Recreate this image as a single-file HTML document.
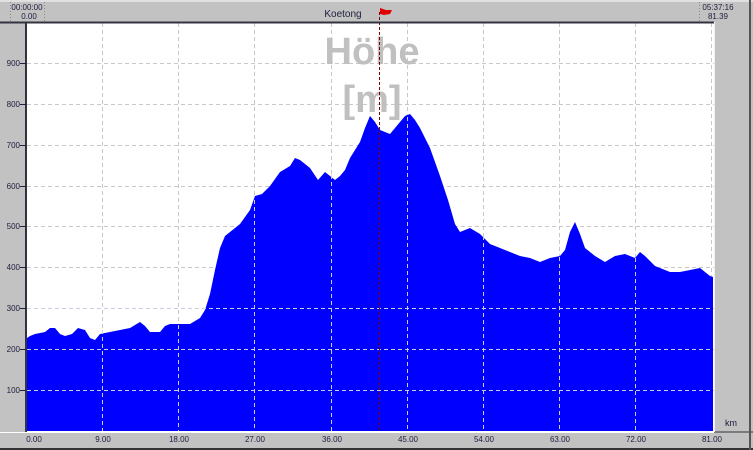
<!DOCTYPE html>
<html><head><meta charset="utf-8"><style>
html,body{margin:0;padding:0;}
body{width:753px;height:450px;background:#c0c0c0;position:relative;overflow:hidden;font-family:"Liberation Sans",sans-serif;}
</style></head><body>
<svg width="753" height="450" xmlns="http://www.w3.org/2000/svg" style="position:absolute;left:0;top:0">
<rect width="753" height="450" fill="#c2c2c2"/>
<rect x="27" y="23" width="687" height="409" fill="#fff"/>
<g stroke="#c8c8c8" stroke-dasharray="4,3" stroke-width="1">
<line x1="102.5" y1="23" x2="102.5" y2="431"/><line x1="178.5" y1="23" x2="178.5" y2="431"/>
<line x1="254.5" y1="23" x2="254.5" y2="431"/><line x1="331.5" y1="23" x2="331.5" y2="431"/>
<line x1="407.5" y1="23" x2="407.5" y2="431"/><line x1="483.5" y1="23" x2="483.5" y2="431"/>
<line x1="559.5" y1="23" x2="559.5" y2="431"/><line x1="635.5" y1="23" x2="635.5" y2="431"/>
<line x1="711.5" y1="23" x2="711.5" y2="431"/>
<line x1="27" y1="63.5" x2="714" y2="63.5"/><line x1="27" y1="104.5" x2="714" y2="104.5"/>
<line x1="27" y1="145.5" x2="714" y2="145.5"/><line x1="27" y1="186.5" x2="714" y2="186.5"/>
<line x1="27" y1="226.5" x2="714" y2="226.5"/><line x1="27" y1="267.5" x2="714" y2="267.5"/>
<line x1="27" y1="308.5" x2="714" y2="308.5"/><line x1="27" y1="349.5" x2="714" y2="349.5"/>
<line x1="27" y1="390.5" x2="714" y2="390.5"/>
</g>
<text x="372" y="64" font-size="38" font-weight="bold" fill="#c0c0c0" text-anchor="middle">Höhe</text>
<text x="372" y="112" font-size="38" font-weight="bold" fill="#c0c0c0" text-anchor="middle">[m]</text>
<polygon fill="#0000ff" points="27,338 30,336 35,334 45,332 50,328 55,328 60,334 65,336 72,334 78,328 85,330 90,338 95,340 100,334 110,332 120,330 130,328 140,322 145,326 150,332 160,332 165,326 170,324 180,324 190,324 200,318 205,310 210,294 215,270 220,248 225,236 235,228 240,224 250,210 255,196 262,194 270,186 280,172 290,166 295,158 300,160 310,168 318,180 325,172 330,176 335,180 340,176 345,170 350,158 360,142 365,128 370,116 375,122 380,130 385,132 390,134 395,128 400,122 405,116 410,114 415,120 420,128 430,148 440,176 448,200 455,224 460,232 470,228 480,234 490,244 500,248 510,252 520,256 530,258 540,262 550,258 560,256 565,250 570,232 575,222 580,234 585,248 595,256 605,262 615,256 625,254 635,258 640,252 645,256 655,266 665,270 670,272 680,272 690,270 700,268 705,272 710,276 713,277 713,431 27,431"/>
<g stroke="#ccccdd" stroke-dasharray="4,3" stroke-width="1">
<line x1="27" y1="349.5" x2="713" y2="349.5"/><line x1="27" y1="390.5" x2="713" y2="390.5"/><line x1="27" y1="308.5" x2="713" y2="308.5"/>
<line x1="102.5" y1="330" x2="102.5" y2="431"/><line x1="178.5" y1="325" x2="178.5" y2="431"/><line x1="254.5" y1="200" x2="254.5" y2="431"/>
<line x1="331.5" y1="175" x2="331.5" y2="431"/><line x1="407.5" y1="117" x2="407.5" y2="431"/><line x1="483.5" y1="236" x2="483.5" y2="431"/>
<line x1="559.5" y1="257" x2="559.5" y2="431"/><line x1="635.5" y1="258" x2="635.5" y2="431"/>
</g>
<line x1="379.5" y1="12" x2="379.5" y2="431" stroke="#800000" stroke-dasharray="3,2"/>
<polygon points="380,8 386,10 392,10 390,14 384,15 380,14" fill="#e00000"/>
<rect x="0" y="0" width="753" height="2" fill="#e0e0e0"/>
<line x1="0" y1="22.5" x2="714" y2="22.5" stroke="#333340" stroke-width="2"/>
<line x1="26" y1="22" x2="26" y2="432" stroke="#333340" stroke-width="2"/>
<line x1="0" y1="432.5" x2="714" y2="432.5" stroke="#fff" stroke-width="1"/>
<line x1="714" y1="432" x2="753" y2="432" stroke="#333340" stroke-width="1"/>
<line x1="714.5" y1="22" x2="714.5" y2="432" stroke="#f0f0f0"/>
<rect x="0" y="448" width="753" height="2" fill="#333"/>
<line x1="750" y1="0" x2="750" y2="450" stroke="#555" stroke-width="2"/>
<line x1="10.5" y1="2" x2="10.5" y2="22" stroke="#888" stroke-dasharray="1,2"/>
<line x1="44.5" y1="2" x2="44.5" y2="22" stroke="#888" stroke-dasharray="1,2"/>
<line x1="699.5" y1="2" x2="699.5" y2="22" stroke="#888" stroke-dasharray="1,2"/>
<g font-size="8" fill="#202040">
<text x="27" y="10" text-anchor="middle">00:00:00</text>
<text x="29" y="19" text-anchor="middle">0.00</text>
<text x="718" y="10" text-anchor="middle">05:37:16</text>
<text x="718" y="19" text-anchor="middle">81.39</text>
</g>
<text x="343" y="17" font-size="10" fill="#202040" text-anchor="middle">Koetong</text>
<g font-size="8" fill="#202040" text-anchor="end">
<text x="20" y="66">900</text><text x="20" y="107">800</text><text x="20" y="148">700</text>
<text x="20" y="189">600</text><text x="20" y="229">500</text><text x="20" y="270">400</text>
<text x="20" y="311">300</text><text x="20" y="352">200</text><text x="20" y="393">100</text>
</g>
<g stroke="#202040">
<line x1="20" y1="63.5" x2="26" y2="63.5"/><line x1="20" y1="104.5" x2="26" y2="104.5"/><line x1="20" y1="145.5" x2="26" y2="145.5"/>
<line x1="20" y1="186.5" x2="26" y2="186.5"/><line x1="20" y1="226.5" x2="26" y2="226.5"/><line x1="20" y1="267.5" x2="26" y2="267.5"/>
<line x1="20" y1="308.5" x2="26" y2="308.5"/><line x1="20" y1="349.5" x2="26" y2="349.5"/><line x1="20" y1="390.5" x2="26" y2="390.5"/>
</g>
<g font-size="8" fill="#202040" text-anchor="middle">
<text x="34" y="442">0.00</text><text x="103" y="442">9.00</text><text x="179" y="442">18.00</text>
<text x="255" y="442">27.00</text><text x="332" y="442">36.00</text><text x="408" y="442">45.00</text>
<text x="484" y="442">54.00</text><text x="560" y="442">63.00</text><text x="636" y="442">72.00</text>
<text x="712" y="442">81.00</text>
</g>
<text x="731" y="426" font-size="9" fill="#202040" text-anchor="middle">km</text>
</svg>
</body></html>
